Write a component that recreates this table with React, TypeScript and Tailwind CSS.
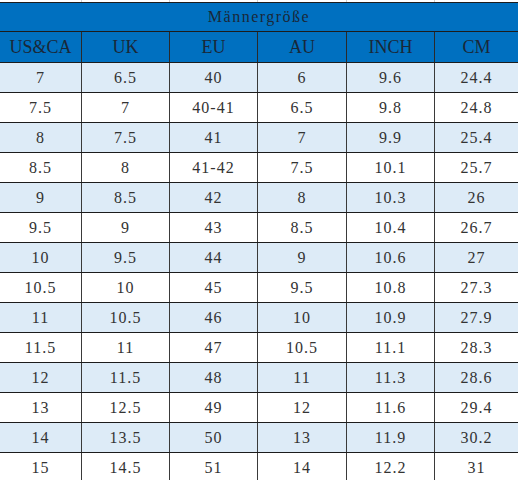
import React from 'react';

const cols = ["US&CA", "UK", "EU", "AU", "INCH", "CM"];

const rows = [
  ["7", "6.5", "40", "6", "9.6", "24.4"],
  ["7.5", "7", "40-41", "6.5", "9.8", "24.8"],
  ["8", "7.5", "41", "7", "9.9", "25.4"],
  ["8.5", "8", "41-42", "7.5", "10.1", "25.7"],
  ["9", "8.5", "42", "8", "10.3", "26"],
  ["9.5", "9", "43", "8.5", "10.4", "26.7"],
  ["10", "9.5", "44", "9", "10.6", "27"],
  ["10.5", "10", "45", "9.5", "10.8", "27.3"],
  ["11", "10.5", "46", "10", "10.9", "27.9"],
  ["11.5", "11", "47", "10.5", "11.1", "28.3"],
  ["12", "11.5", "48", "11", "11.3", "28.6"],
  ["13", "12.5", "49", "12", "11.6", "29.4"],
  ["14", "13.5", "50", "13", "11.9", "30.2"],
  ["15", "14.5", "51", "14", "12.2", "31"],
];

const grid = "grid grid-cols-[82px_88px_88px_89px_88px_83px]";

export default function App() {
  return (
    <div className="w-[518px] h-[480px] overflow-hidden bg-white" style={{ fontFamily: '"Liberation Serif", "Times New Roman", serif' }}>
      {/* cut-off row above */}
      <div className={grid + " h-[2px]"}>
        {cols.map((c, i) => (
          <div key={c} className={i < 5 ? "border-r border-[#d0d0d0]" : ""} />
        ))}
      </div>

      <div className="h-[30px] bg-[#0070c0] border-y border-[#1c1c1c] flex items-center justify-center text-[16px] tracking-[1.5px] text-[#1a2838]">
        Männergröße
      </div>

      <div className={grid + " h-[31px] bg-[#0070c0] border-b border-[#1c1c1c]"}>
        {cols.map((c, i) => (
          <div key={c} className={"flex items-center justify-center text-[18px] text-[#1a2838] " + (i < 5 ? "border-r border-[#2a2a2a]" : "")}>
            {c}
          </div>
        ))}
      </div>

      {rows.map((r, ri) => (
        <div key={ri} className={grid + " h-[30px] border-b border-[#1c1c1c] " + (ri % 2 === 0 ? "bg-[#ddebf7]" : "bg-white")}>
          {r.map((v, i) => (
            <div key={i} className={"flex items-center justify-center text-[16px] tracking-[1px] text-[#333333] " + (i < 5 ? "border-r border-[#3a3a3a]" : "")}>
              {v}
            </div>
          ))}
        </div>
      ))}
    </div>
  );
}
